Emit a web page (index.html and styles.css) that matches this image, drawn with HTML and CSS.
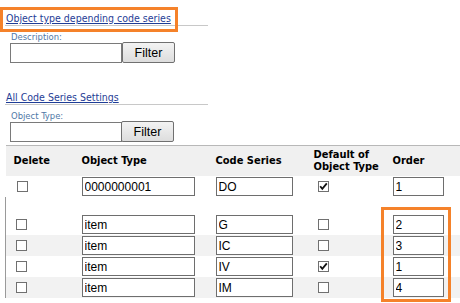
FILE: index.html
```html
<!DOCTYPE html>
<html>
<head>
<meta charset="utf-8">
<link rel="stylesheet" href="styles.css">
</head>
<body>
<div class="page">
  <section class="group group-first">
    <h2 class="group-title"><a href="#">Object type depending code series</a></h2>
    <div class="field-label">Description:</div>
    <div class="filter-row"><input class="filter-input" type="text"><button class="filter-btn">Filter</button></div>
  </section>
  <section class="group">
    <h2 class="group-title"><a href="#">All Code Series Settings</a></h2>
    <div class="field-label">Object Type:</div>
    <div class="filter-row"><input class="filter-input" type="text"><button class="filter-btn filter-btn-2">Filter</button></div>
  </section>
  <table class="grid">
    <colgroup>
      <col class="c1"><col class="c2"><col class="c3"><col class="c4"><col class="c5">
    </colgroup>
    <thead>
      <tr>
        <th>Delete</th><th>Object Type</th><th>Code Series</th><th>Default of<br>Object Type</th><th>Order</th>
      </tr>
    </thead>
    <tbody>
      <tr>
        <td><span class="cb"></span></td>
        <td><input class="in in-type" type="text" value="0000000001"></td>
        <td><input class="in in-code" type="text" value="DO"></td>
        <td><span class="cb cb-def"><svg viewBox="0 0 11 11" width="11" height="11"><path d="M2.2 5.2 L4.3 7.8 L8.8 2.4" fill="none" stroke="#111" stroke-width="1.8"/></svg></span></td>
        <td><input class="in in-order" type="text" value="1"></td>
      </tr>
      <tr class="spacer"><td></td><td></td><td></td><td></td><td></td></tr>
      <tr class="lower">
        <td><span class="cb"></span></td>
        <td><input class="in in-type" type="text" value="item"></td>
        <td><input class="in in-code" type="text" value="G"></td>
        <td><span class="cb cb-def"></span></td>
        <td><input class="in in-order" type="text" value="2"></td>
      </tr>
      <tr class="lower alt">
        <td><span class="cb"></span></td>
        <td><input class="in in-type" type="text" value="item"></td>
        <td><input class="in in-code" type="text" value="IC"></td>
        <td><span class="cb cb-def"></span></td>
        <td><input class="in in-order" type="text" value="3"></td>
      </tr>
      <tr class="lower">
        <td><span class="cb"></span></td>
        <td><input class="in in-type" type="text" value="item"></td>
        <td><input class="in in-code" type="text" value="IV"></td>
        <td><span class="cb cb-def"><svg viewBox="0 0 11 11" width="11" height="11"><path d="M2.2 5.2 L4.3 7.8 L8.8 2.4" fill="none" stroke="#111" stroke-width="1.8"/></svg></span></td>
        <td><input class="in in-order" type="text" value="1"></td>
      </tr>
      <tr class="lower alt">
        <td><span class="cb"></span></td>
        <td><input class="in in-type" type="text" value="item"></td>
        <td><input class="in in-code" type="text" value="IM"></td>
        <td><span class="cb cb-def"></span></td>
        <td><input class="in in-order" type="text" value="4"></td>
      </tr>
    </tbody>
  </table>
  <div class="hl hl-title"></div>
  <div class="hl hl-order"></div>
</div>
</body>
</html>
```
FILE: styles.css
```css
html, body {
  margin: 0;
  padding: 0;
  background: #fff;
}
.page {
  position: relative;
  width: 460px;
  height: 303px;
  overflow: hidden;
  font-family: "DejaVu Sans Condensed", "DejaVu Sans", sans-serif;
  color: #000;
}
.group-first {
  height: 79px;
}
.group-title {
  margin: 0 0 0 5px;
  width: 202px;
  padding: 12px 0 0 1px;
  font-size: 10.5px;
  font-weight: normal;
  line-height: 13px;
  border-bottom: 1px solid #c8c8c8;
}
.group-title a {
  color: #1f3d96;
  text-decoration: underline;
}
.field-label {
  margin: 5px 0 0 11px;
  font-size: 9.4px;
  line-height: 11px;
  color: #4f78a6;
}
.filter-row {
  display: flex;
  align-items: center;
  margin-left: 10px;
  height: 21px;
}
.filter-input {
  box-sizing: border-box;
  width: 112px;
  height: 20px;
  margin: 0;
  border: 1px solid #7a7a7a;
  padding: 0 2px;
}
.filter-btn {
  box-sizing: border-box;
  width: 53px;
  height: 21px;
  margin: 0;
  padding: 0;
  border: 1px solid #707070;
  border-radius: 2px;
  background: linear-gradient(#f3f3f3, #dddddd);
  font-family: "Liberation Sans", Arial, sans-serif;
  font-size: 12.5px;
  color: #000;
}
.filter-btn-2 {
  margin-left: -1px;
}
.grid {
  margin: 3px 0 0 5px;
  width: 455px;
  table-layout: fixed;
  border-collapse: collapse;
  border-top: 1px solid #b8b8b8;
}
.c1 { width: 72px; }
.c2 { width: 134px; }
.c3 { width: 98px; }
.c4 { width: 79px; }
.c5 { width: 72px; }
.grid th {
  background: #f0f0f0;
  height: 30px;
  padding: 0 0 0 4px;
  text-align: left;
  vertical-align: middle;
  font-size: 11px;
  line-height: 12px;
  font-weight: bold;
}
.grid th:first-child { padding-left: 8px; }
.grid td {
  height: 21px;
  padding: 0 0 0 4px;
  vertical-align: middle;
}
.grid td:first-child { padding-left: 11px; }
.grid .spacer td { height: 17px; }
.grid .spacer td:first-child,
.grid .lower td:first-child {
  border-left: 1px solid #9a9a9a;
  padding-left: 10px;
}
.grid .alt td { background: #f2f2f2; }
.in {
  display: block;
  box-sizing: border-box;
  height: 19px;
  margin: 0;
  padding: 0 2px;
  border: 1px solid #6e6e6e;
  background: #fff;
  font-family: "Liberation Sans", Arial, sans-serif;
  font-size: 12px;
  color: #000;
}
.in-type { width: 113px; }
.in-code { width: 77px; }
.in-order { width: 51px; }
.cb {
  display: block;
  box-sizing: border-box;
  width: 11px;
  height: 11px;
  border: 1px solid #707070;
  background: #fff;
  position: relative;
}
.cb svg {
  position: absolute;
  left: -1px;
  top: -1px;
}
.cb-def { margin-left: 4px; }
.hl {
  position: absolute;
  box-sizing: border-box;
  border: 3px solid #f5822a;
}
.hl-title {
  left: 0;
  top: 7px;
  width: 178px;
  height: 25px;
}
.hl-order {
  left: 381px;
  top: 207px;
  width: 70px;
  height: 95px;
}
```
